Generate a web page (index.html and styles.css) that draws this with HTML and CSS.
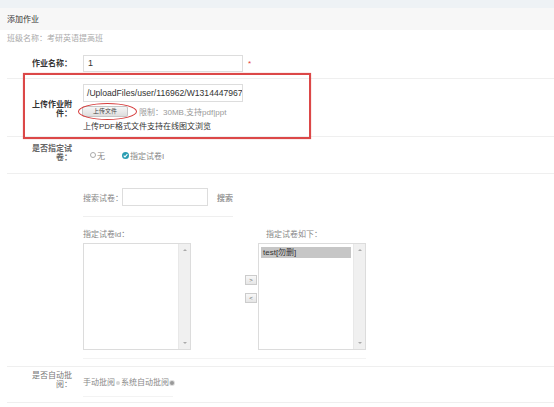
FILE: index.html
```html
<!DOCTYPE html>
<html lang="zh">
<head>
<meta charset="utf-8">
<title>添加作业</title>
<link rel="stylesheet" href="styles.css">
</head>
<body>
<div class="topbar"></div>
<div class="header">添加作业</div>
<div class="classname">班级名称：考研英语提高班</div>
<div class="form">
  <div class="row row-name">
    <div class="label strong">作业名称：</div>
    <div class="content inline">
      <div class="input">1</div><span class="req">*</span>
    </div>
  </div>

  <div class="row row-upload">
    <div class="label strong">上传作业附件：</div>
    <div class="content">
      <div class="input input-file">/UploadFiles/user/116962/W1314447967</div>
      <div class="btn-line">
        <div class="btn-upload">上传文件<span class="ellipse"></span></div>
        <span class="limit">限制：30MB,支持pdf|ppt</span>
      </div>
      <div class="hint">上传PDF格式文件支持在线图文浏览</div>
    </div>
    <div class="annot"></div>
  </div>

  <div class="row row-paper">
    <div class="label strong2">是否指定试卷：</div>
    <div class="content">
      <div class="radios">
        <span class="radio-empty"></span><span>无</span>
        <svg class="radio-checked" width="7" height="7" viewBox="0 0 7 7"><circle cx="3.5" cy="3.5" r="3.5" fill="#2a9db2"/><path d="M1.7 3.6 L3 4.9 L5.4 2.2" stroke="#fff" stroke-width="1.1" fill="none"/></svg><span>指定试卷I</span>
      </div>
    </div>
  </div>

  <div class="row row-lists">
    <div class="label"></div>
    <div class="content">
      <div class="search">
        <span class="search-label">搜索试卷：</span>
        <div class="search-input"></div>
        <span class="search-btn">搜索</span>
      </div>
      <div class="lists">
        <div class="col">
          <div class="col-title">指定试卷id：</div>
          <div class="listbox">
            <div class="lb-body"></div>
            <div class="sb"><span class="arr-up"></span><span class="arr-down"></span></div>
          </div>
        </div>
        <div class="mid">
          <div class="mv-btn">&gt;</div>
          <div class="mv-btn">&lt;</div>
        </div>
        <div class="col">
          <div class="col-title col-title-right">指定试卷如下：</div>
          <div class="listbox">
            <div class="lb-body"><div class="lb-item">test[勿删]</div></div>
            <div class="sb"><span class="arr-up"></span><span class="arr-down"></span></div>
          </div>
        </div>
      </div>
    </div>
  </div>

  <div class="row row-auto">
    <div class="label light">是否自动批阅：</div>
    <div class="content">
      <div class="opts">
        <span>手动批阅</span><span class="dot"></span><span class="opt2">系统自动批阅</span><span class="dot dot-on"></span>
      </div>
    </div>
  </div>
</div>
</body>
</html>
```

FILE: styles.css
```css
body {
  margin: 0;
  font-family: "Liberation Sans", "Noto Sans CJK SC", sans-serif;
  font-size: 8px;
  color: #333;
  background: #fff;
}

span {
  white-space: nowrap;
  flex: none;
}

.topbar {
  height: 8px;
  background: #eef2f5;
}

.header {
  height: 22px;
  line-height: 24px;
  background: #f7f7f7;
  padding-left: 7px;
  color: #333;
}

.classname {
  height: 17px;
  line-height: 18px;
  padding-left: 7px;
  color: #aaa;
}

.row {
  margin-left: 7px;
  display: flex;
  border-bottom: 1px solid #efefef;
}

.label {
  width: 65px;
  flex: none;
  box-sizing: border-box;
  padding-left: 23px;
  margin-right: 11px;
  text-align: right;
  line-height: 9px;
}

.strong {
  font-weight: bold;
  color: #333;
}

.strong2 {
  font-weight: bold;
  color: #666;
}

.light {
  color: #777;
}

.inline {
  display: flex;
  align-items: center;
}

.input {
  width: 160px;
  height: 17px;
  box-sizing: border-box;
  border: 1px solid #ddd;
  padding-left: 4px;
  line-height: 15px;
  font-size: 9px;
  color: #333;
  overflow: hidden;
  white-space: nowrap;
}

.req {
  color: #e53935;
  margin-left: 5px;
  font-size: 8px;
}

/* row 1 */
.row-name {
  padding: 8px 0 6px;
  align-items: center;
}

/* row 2 */
.row-upload {
  position: relative;
  padding: 5px 0 3px;
  align-items: center;
}

.input-file {
  height: 18px;
  line-height: 16px;
  padding-left: 3px;
  font-size: 8.6px;
}

.btn-line {
  display: flex;
  align-items: center;
  height: 12px;
  margin-top: 3px;
}

.btn-upload {
  position: relative;
  width: 46px;
  height: 11px;
  margin-left: -1px;
  box-sizing: border-box;
  border: 1px solid #c6c6c6;
  border-radius: 2px;
  background: linear-gradient(#f6f6f6, #dedede);
  font-size: 6px;
  line-height: 9px;
  text-align: center;
  color: #444;
  white-space: nowrap;
}

.ellipse {
  position: absolute;
  left: -5px;
  top: -4px;
  width: 59px;
  height: 17px;
  box-sizing: border-box;
  border: 1.5px solid #d63c3c;
  border-radius: 50%;
}

.limit {
  margin-left: 11px;
  color: #999;
}

.hint {
  margin-top: 4px;
  line-height: 12px;
  color: #333;
  white-space: nowrap;
}

.annot {
  position: absolute;
  left: 16px;
  top: -6px;
  width: 288px;
  height: 66px;
  box-sizing: border-box;
  border: 2px solid #dc4848;
  box-shadow: 0 0 1px rgba(220, 72, 72, 0.6);
}

/* row 3 */
.row-paper {
  padding: 7px 0 11px;
  align-items: flex-start;
}

.radios {
  display: flex;
  align-items: center;
  height: 12px;
  margin-top: 5px;
  padding-left: 7px;
  color: #888;
}

.radio-empty {
  width: 6px;
  height: 6px;
  box-sizing: border-box;
  border: 1px solid #aaa;
  border-radius: 50%;
  margin-right: 1px;
}

.radio-checked {
  flex: none;
  margin-left: 17px;
  margin-right: 1px;
}

/* row 4 */
.row-lists {
  padding: 14px 0 7px;
}

.search {
  width: 150px;
  height: 18px;
  padding-bottom: 10px;
  border-bottom: 1px solid #efefef;
  display: flex;
  align-items: center;
}

.search-label {
  width: 39px;
  color: #888;
}

.search-input {
  width: 86px;
  height: 18px;
  flex: none;
  box-sizing: border-box;
  border: 1px solid #ddd;
}

.search-btn {
  margin-left: 9px;
  color: #999;
  font-weight: bold;
}

.lists {
  width: 283px;
  display: flex;
  margin-top: 12px;
  padding-bottom: 8px;
  border-bottom: 1px solid #f3f3f3;
}

.col {
  width: 108px;
  flex: none;
}

.col-title {
  line-height: 12px;
  color: #888;
  white-space: nowrap;
}

.col-title-right {
  padding-left: 8px;
}

.listbox {
  margin-top: 2px;
  height: 107px;
  box-sizing: border-box;
  border: 1px solid #dcdcdc;
  display: flex;
}

.lb-body {
  flex: 1;
  padding: 3px 2px;
}

.lb-item {
  height: 11px;
  line-height: 11px;
  padding-left: 2px;
  background: #c6c6c6;
  color: #333;
  white-space: nowrap;
}

.sb {
  width: 11px;
  background: #f0f0f0;
  border-left: 1px solid #e8e8e8;
  display: flex;
  flex-direction: column;
  justify-content: space-between;
  align-items: center;
  padding: 5px 0 5px;
}

.arr-up {
  width: 0;
  height: 0;
  border-left: 2px solid transparent;
  border-right: 2px solid transparent;
  border-bottom: 2px solid #aaa;
}

.arr-down {
  width: 0;
  height: 0;
  border-left: 2px solid transparent;
  border-right: 2px solid transparent;
  border-top: 2px solid #aaa;
}

.mid {
  width: 12px;
  flex: none;
  margin-left: 54px;
  margin-right: 1px;
  padding-top: 46px;
  display: flex;
  flex-direction: column;
  gap: 8px;
}

.mv-btn {
  width: 12px;
  height: 10px;
  box-sizing: border-box;
  border: 1px solid #ccc;
  background: linear-gradient(#f8f8f8, #e6e6e6);
  font-size: 6px;
  line-height: 8px;
  text-align: center;
  color: #666;
}

/* row 5 */
.row-auto {
  padding: 4px 0 5px;
  align-items: flex-start;
}

.opts {
  margin-top: 5px;
  width: 90px;
  height: 14px;
  line-height: 14px;
  padding-bottom: 6px;
  border-bottom: 1px solid #f3f3f3;
  display: flex;
  align-items: center;
  color: #888;
}

.dot {
  width: 4px;
  height: 4px;
  border-radius: 50%;
  background: #d6d6d6;
  margin-left: 1px;
}

.dot-on {
  background: #999;
  box-shadow: 0 0 0 1px #ddd;
}

.opt2 {
  margin-left: 1px;
}
```
